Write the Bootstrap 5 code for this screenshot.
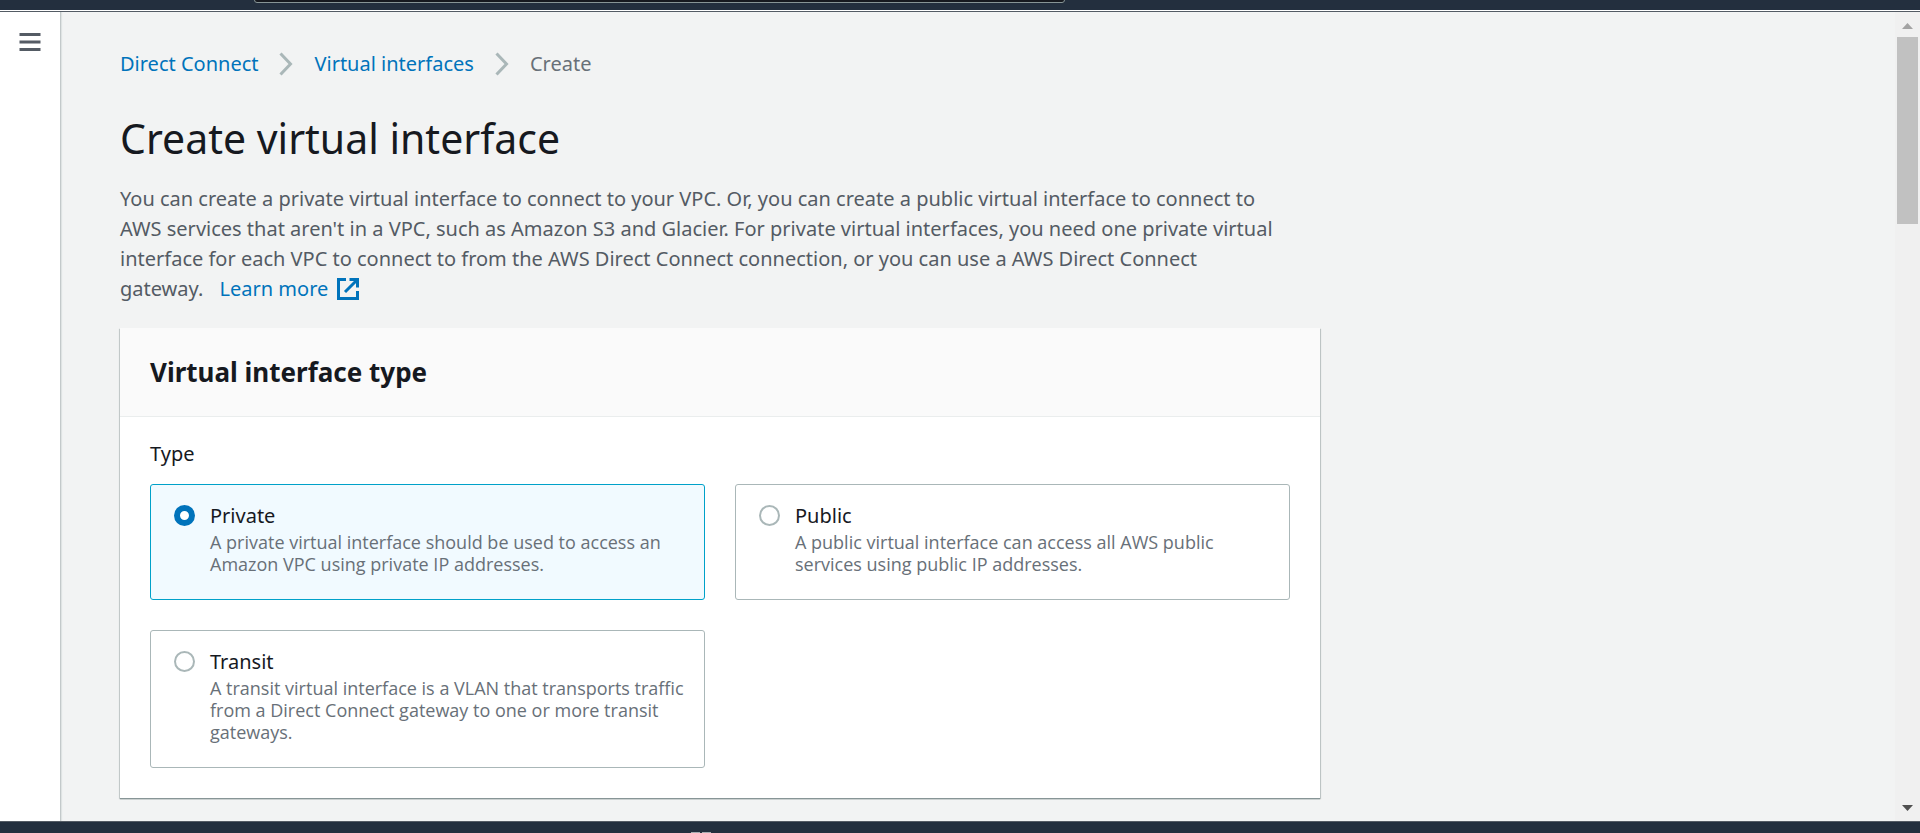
<!DOCTYPE html>
<html lang="en">
<head>
<meta charset="utf-8">
<meta name="viewport" content="width=device-width, initial-scale=1">
<title>Create virtual interface</title>
<link href="https://cdn.jsdelivr.net/npm/bootstrap@5.3.0/dist/css/bootstrap.min.css" rel="stylesheet">
<style>
body { font-family: "Noto Sans", "Open Sans", sans-serif; font-size: 20px; line-height: 30px; color: #16191f; background: #f2f3f3; }
a { color: #0073bb; text-decoration: none; }
a:hover { text-decoration: underline; }
.topbar { height: 12px; background: #232f3e; border-bottom: 1px solid #545b64; box-shadow: inset 0 -1px #fff; padding: 0 0 8px 254px; }
.topbar input { flex: 0 1 811px; min-width: 0; height: 40px; background: #16191f; border: 1px solid #879596; border-radius: 3px; color: #fff; }
.rail { flex: 0 0 61px; background: #fff; border-right: 1px solid #c3c9ca; box-shadow: 1px 0 1px #dfe3e3; padding-top: 17px; }
.content { min-width: 0; padding: 37px 59px 0 59px; }
.pane { max-width: 1200px; }
.crumbs { gap: 21px; }
.crumbs li { color: #687078; }
.page-title { font-size: 41px; line-height: 54px; font-weight: 400; margin: 32px 0 19px; }
.intro { color: #545b64; margin-bottom: 24px; }
.intro a { margin-left: 11px; }
.intro svg { vertical-align: -4px; }
.panel { background: #fff; box-shadow: 0 1px 1px #879596, 0 1px 1px #879596, -1px 1px 1px #87959633, 1px 1px 1px #87959644; }
.panel-head { background: #fafafa; border-bottom: 1px solid #eaeded; padding: 28px 30px; }
.panel-head h2 { font-size: 26px; line-height: 32px; font-weight: 700; margin: 0; }
.panel-main { padding: 22px 30px 30px; }
.panel-main legend { font-size: 20px; line-height: 30px; margin-bottom: 15px; }
.tiles { display: grid; grid-template-columns: 1fr 1fr; gap: 30px; align-items: start; }
.tile { display: grid; grid-template-columns: 22px 1fr; column-gap: 14px; border: 1px solid #aab7b8; border-radius: 3px; padding: 16px 10px 24px 23px; cursor: pointer; }
.tile:has(:checked) { background: #f1faff; border-color: #00a1c9; }
.tile input { appearance: none; width: 21px; height: 21px; margin: 4px 0 0; border: 2px solid #aab7b8; border-radius: 50%; background: #fff; }
.tile input:checked { border: 6px solid #0073bb; }
.tile-name { display: block; line-height: 30px; }
.tile-text { display: block; font-family: "Open Sans", "Noto Sans", sans-serif; font-size: 18px; line-height: 22px; color: #687078; }
.scroller { flex: 0 0 25px; background: #f0f0f0; padding: 10px 2px 10px; }
.scroller button { border: 0; padding: 0; background: none; height: 7px; width: 21px; line-height: 0; }
.scroller svg { display: block; margin: auto; }
.scroller .thumb { height: 187px; background: #c1c1c1; margin-top: 8px; }
.bottombar { height: 12px; background: #232f3e; border-top: 1px solid #545b64; padding: 10px 0 0 691px; }
</style>
</head>
<body class="vh-100 d-flex flex-column overflow-hidden">
<header class="topbar d-flex align-items-end overflow-hidden flex-shrink-0">
  <input type="search" aria-label="Search">
</header>
<div class="d-flex flex-grow-1 overflow-hidden">
  <aside class="rail text-center">
    <button type="button" class="btn p-0 border-0 d-block mx-auto" aria-label="Open navigation">
      <svg class="d-block" width="24" height="26" viewBox="0 0 24 26" fill="none" stroke="#545b64" stroke-width="3"><path d="M1.500 5.500h21M1.500 13h21M1.500 20.500h21"/></svg>
    </button>
  </aside>
  <main class="content flex-grow-1">
    <div class="pane">
      <nav aria-label="Breadcrumb">
        <ol class="crumbs list-unstyled d-flex align-items-center mb-0">
          <li><a href="#">Direct Connect</a></li>
          <li aria-hidden="true"><svg class="d-block" width="14" height="24" viewBox="0 0 14 24" fill="none" stroke="#aab7b8" stroke-width="3"><path d="M1.500 1.500 11.500 12 1.500 22.500"/></svg></li>
          <li><a href="#">Virtual interfaces</a></li>
          <li aria-hidden="true"><svg class="d-block" width="14" height="24" viewBox="0 0 14 24" fill="none" stroke="#aab7b8" stroke-width="3"><path d="M1.500 1.500 11.500 12 1.500 22.500"/></svg></li>
          <li aria-current="page">Create</li>
        </ol>
      </nav>
      <h1 class="page-title">Create virtual interface</h1>
      <p class="intro">You can create a private virtual interface to connect to your VPC. Or, you can create a public virtual interface to connect to<br>AWS services that aren't in a VPC, such as Amazon S3 and Glacier. For private virtual interfaces, you need one private virtual<br>interface for each VPC to connect to from the AWS Direct Connect connection, or you can use a AWS Direct Connect<br>gateway. <a href="#">Learn more <svg class="ms-1" width="22" height="22" viewBox="0 0 22 22" fill="none" stroke="#0073bb" stroke-width="3"><path d="M9 1.500H1.500v19h19V13M12.500 1.500h8v8M20 2 8 14"/></svg></a></p>
      <section class="panel">
        <div class="panel-head"><h2>Virtual interface type</h2></div>
        <fieldset class="panel-main">
          <legend>Type</legend>
          <div class="tiles">
            <label class="tile"><input type="radio" name="type" checked><span><span class="tile-name">Private</span><span class="tile-text">A private virtual interface should be used to access an<br>Amazon VPC using private IP addresses.</span></span></label>
            <label class="tile"><input type="radio" name="type"><span><span class="tile-name">Public</span><span class="tile-text">A public virtual interface can access all AWS public<br>services using public IP addresses.</span></span></label>
            <label class="tile"><input type="radio" name="type"><span><span class="tile-name">Transit</span><span class="tile-text">A transit virtual interface is a VLAN that transports traffic<br>from a Direct Connect gateway to one or more transit<br>gateways.</span></span></label>
          </div>
        </fieldset>
      </section>
    </div>
  </main>
  <div class="scroller d-flex flex-column">
    <button type="button" aria-label="Scroll up"><svg width="11" height="6" viewBox="0 0 11 6"><path d="M0 6 5.500 0 11 6z" fill="#a3a3a3"/></svg></button>
    <div class="thumb"></div>
    <button type="button" class="mt-auto" aria-label="Scroll down"><svg width="11" height="6" viewBox="0 0 11 6"><path d="M0 0 5.500 6 11 0z" fill="#505050"/></svg></button>
  </div>
</div>
<footer class="bottombar overflow-hidden flex-shrink-0">
  <svg class="d-block" width="20" height="20" viewBox="0 0 20 20" fill="#a7acb1"><path d="M0 0h9v9H0zM11 0h9v9h-9zM0 11h9v9H0zM11 11h9v9h-9z"/></svg>
</footer>
<script src="https://cdn.jsdelivr.net/npm/bootstrap@5.3.0/dist/js/bootstrap.bundle.min.js"></script>
</body>
</html>
